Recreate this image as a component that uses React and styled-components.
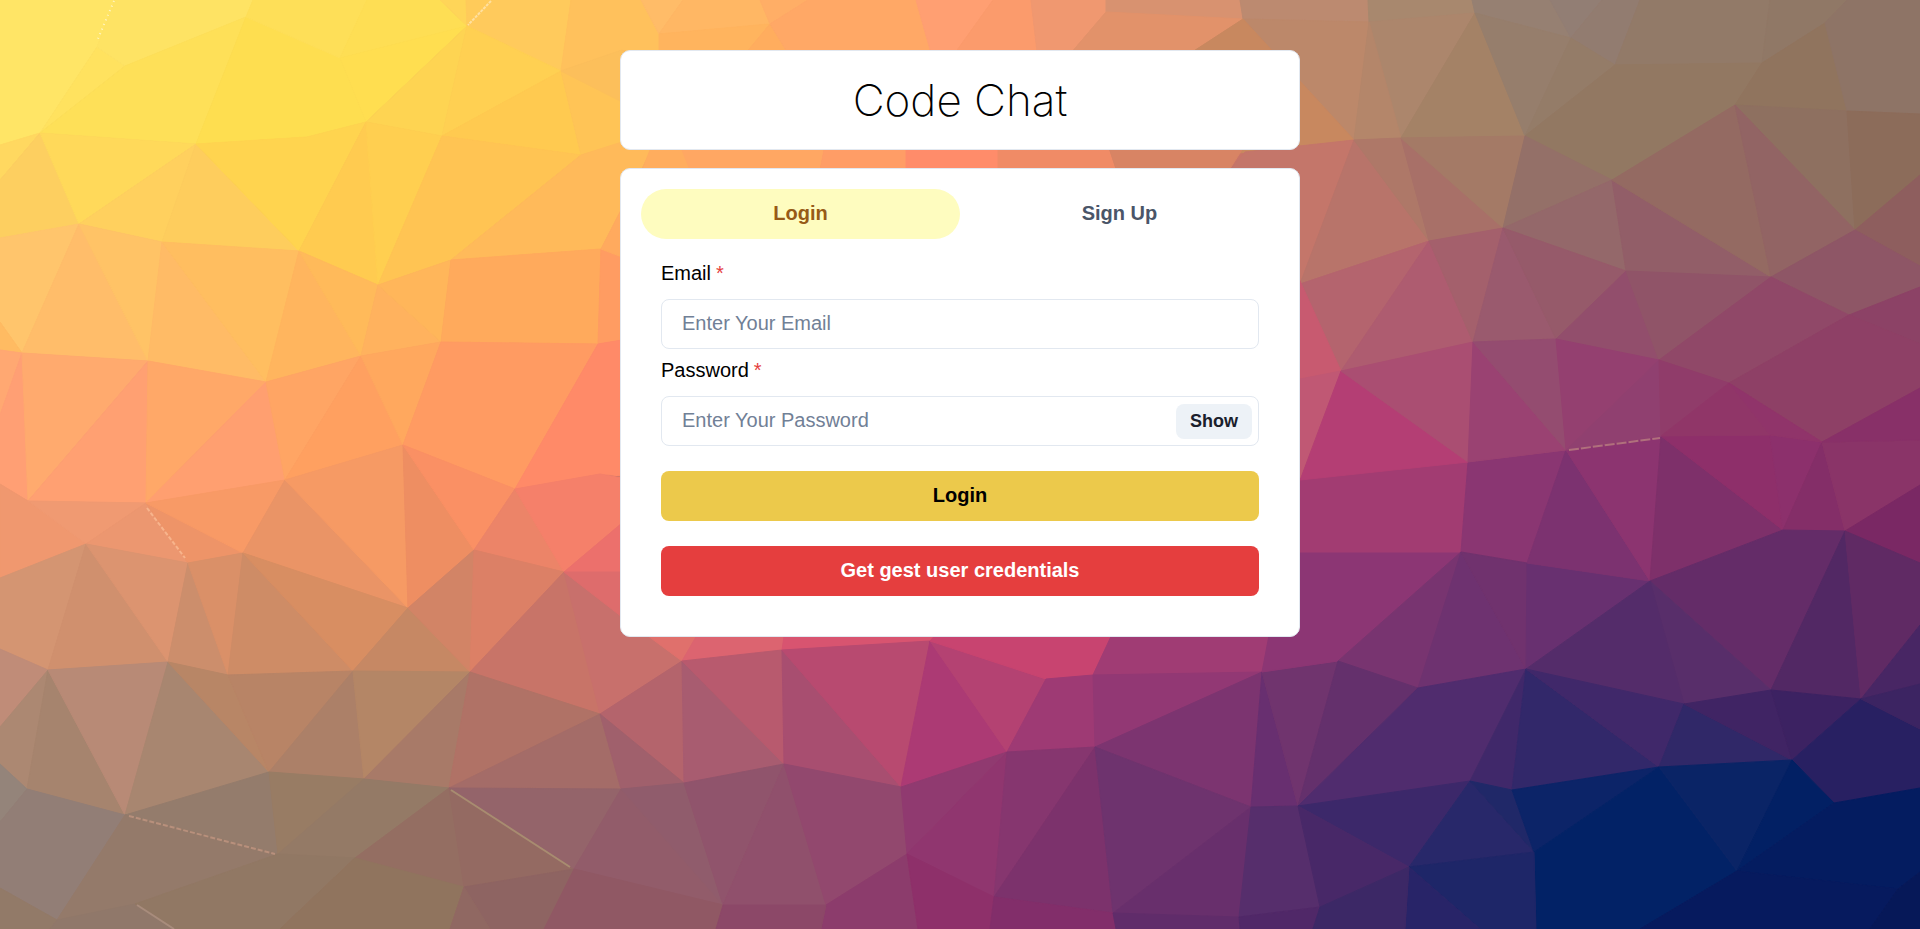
import { useState } from 'react';
import styled, { createGlobalStyle } from 'styled-components';

const GlobalStyle = createGlobalStyle`
  * {
    box-sizing: border-box;
  }

  body {
    margin: 0;
    font-family: 'Liberation Sans', Arial, sans-serif;
    font-size: 20px;
    line-height: 28px;
    color: #000000;
  }

  button,
  input {
    font: inherit;
  }
`;

const Page = styled.div`
  display: grid;
  min-height: 100vh;
`;

const Backdrop = styled.svg`
  grid-area: 1 / 1;
  display: block;
  width: 100%;
  height: 0;
  min-height: 100%;
`;

const Container = styled.main`
  grid-area: 1 / 1;
  z-index: 1;
  justify-self: center;
  align-self: start;
  display: flex;
  flex-direction: column;
  gap: 18px;
  width: 100%;
  max-width: 680px;
  padding: 50px 0;
`;

const Card = styled.section`
  padding: 20px;
  background: #ffffff;
  border: 1px solid #e2e8f0;
  border-radius: 10px;
`;

const Title = styled.h1`
  margin: 0;
  font-family: Inter, sans-serif;
  font-size: 44px;
  font-weight: 200;
  line-height: 58px;
  text-align: center;
`;

const TabList = styled.div`
  display: flex;
`;

const Tab = styled.button`
  flex: 1;
  height: 50px;
  padding: 0 20px 2px;
  border: none;
  border-radius: 25px;
  background: ${({ $active }) => ($active ? '#fefcbf' : 'transparent')};
  color: ${({ $active }) => ($active ? '#975a16' : '#4a5568')};
  font-weight: 600;
  cursor: pointer;
`;

const Form = styled.form`
  display: flex;
  flex-direction: column;
  gap: 25px;
  padding: 20px;
`;

const Fields = styled.div`
  display: flex;
  flex-direction: column;
  gap: 7px;
`;

const Field = styled.div`
  display: flex;
  flex-direction: column;
  gap: 12px;
`;

const Required = styled.span`
  margin-left: 5px;
  color: #e53e3e;
`;

const InputGroup = styled.div`
  display: flex;
  align-items: center;
  height: 50px;
  padding-right: 6px;
  border: 1px solid #e2e8f0;
  border-radius: 8px;

  &:focus-within {
    border-color: #3182ce;
  }
`;

const Input = styled.input`
  flex: 1;
  min-width: 0;
  height: 48px;
  padding: 0 20px 2px;
  border: none;
  outline: none;
  background: transparent;

  &::placeholder {
    color: #718096;
    opacity: 1;
  }
`;

const ShowButton = styled.button`
  height: 35px;
  padding: 0 14px;
  border: none;
  border-radius: 8px;
  background: #edf2f7;
  color: #1a202c;
  font-size: 18px;
  font-weight: 600;
  cursor: pointer;
`;

const Button = styled.button`
  height: 50px;
  padding: 0 20px 2px;
  border: none;
  border-radius: 8px;
  background: ${({ $danger }) => ($danger ? '#e53e3e' : '#ecc94b')};
  color: ${({ $danger }) => ($danger ? '#ffffff' : '#000000')};
  font-weight: 600;
  cursor: pointer;
`;

// low poly background, one entry per facet: [colour, points]
const facets = [
  ['#ffe566', '0,0 115,0 97,47 40,133 0,145'],
  ['#ffe25f', '97,47 125,66 40,133'],
  ['#fee364', '115,0 253,0 246,17 125,66 97,47'],
  ['#fee058', '125,66 246,17 196,144 40,133'],
  ['#fede50', '246,17 340,58 366,122 307,137 196,144'],
  ['#fedf58', '253,0 367,0 340,58 246,17'],
  ['#fede54', '367,0 440,0 467,26 340,58'],
  ['#ffde50', '340,58 467,26 366,122'],
  ['#ffd558', '440,0 466,0 467,26'],
  ['#fed452', '467,26 442,136 366,122'],
  ['#ffcb5a', '466,0 492,0 467,26'],
  ['#ffca5c', '492,0 571,0 561,71 467,26'],
  ['#ffd052', '467,26 561,71 442,136'],
  ['#ffca50', '442,136 561,71 581,155'],
  ['#ffc456', '561,71 640,100 622,143 581,155'],
  ['#ffc15c', '571,0 641,0 659,34 659,60 622,50 561,71'],
  ['#fcbf5b', '561,71 622,50 640,60 640,111'],

  ['#ffd860', '0,145 40,133 0,180'],
  ['#fdcf60', '40,133 79,224 0,238 0,180'],
  ['#ffd95a', '40,133 196,144 79,224'],
  ['#ffd05e', '196,144 162,242 79,224'],
  ['#fecd5d', '196,144 299,251 162,242'],
  ['#ffd44f', '196,144 307,137 366,122 299,251'],
  ['#ffcb50', '366,122 378,285 299,251'],
  ['#ffcf50', '366,122 442,136 378,285'],
  ['#ffc453', '442,136 581,155 451,260 378,285'],
  ['#ffba5a', '581,155 622,142 655,142 622,208 601,249 451,260'],

  ['#ffc56c', '0,238 79,224 22,353 0,322'],
  ['#ffbd6a', '79,224 148,361 22,353'],
  ['#ffc366', '79,224 162,242 148,361'],
  ['#ffbb66', '162,242 266,382 148,361'],
  ['#ffbe60', '162,242 299,251 266,382'],
  ['#ffb55e', '299,251 361,356 266,382'],
  ['#ffba5a', '299,251 378,285 361,356'],
  ['#ffb25e', '378,285 441,342 361,356'],
  ['#ffb65a', '378,285 451,260 441,342'],
  ['#ffaa5c', '451,260 601,249 598,344 441,342'],
  ['#ff9c62', '601,249 622,257 622,340 598,344'],
  ['#ffaa5e', '601,249 622,208 622,257'],
  ['#ffbb62', '0,322 22,353 0,350'],

  ['#ffa872', '0,350 22,353 0,415'],
  ['#ff9f74', '22,353 28,501 0,484 0,415'],
  ['#ffaa6e', '22,353 148,361 28,501'],
  ['#ffa072', '148,361 146,503 28,501'],
  ['#ffa868', '148,361 266,382 146,503'],
  ['#ff9f70', '266,382 285,480 146,503'],
  ['#ffa564', '266,382 361,356 285,480'],
  ['#ffa060', '361,356 403,445 285,480'],
  ['#ffa85e', '361,356 441,342 403,445'],
  ['#ff9b62', '441,342 598,344 515,489 403,445'],
  ['#ff8a68', '598,344 622,340 622,476 600,474 515,489'],

  ['#f0986f', '0,484 28,501 86,544 0,578'],
  ['#f09a72', '28,501 146,503 86,544'],
  ['#ec9770', '146,503 188,563 86,544'],
  ['#ee9468', '146,503 243,553 188,563'],
  ['#f89a66', '146,503 285,480 243,553'],
  ['#ea9466', '285,480 408,608 243,553'],
  ['#f69a64', '285,480 403,445 408,608'],
  ['#ee8e62', '403,445 474,550 408,608'],
  ['#fa9064', '403,445 515,489 474,550'],
  ['#ec8468', '515,489 564,572 474,550'],
  ['#f5806a', '515,489 600,474 622,478 622,523 564,572'],
  ['#ec706c', '622,523 622,572 564,572'],

  ['#d49572', '0,578 86,544 48,670 0,649'],
  ['#d0906e', '86,544 168,662 48,670'],
  ['#dc9470', '86,544 188,563 168,662'],
  ['#cc8e6c', '188,563 228,675 168,662'],
  ['#da9068', '188,563 243,553 228,675'],
  ['#ce8c66', '243,553 353,671 228,675'],
  ['#d88e62', '243,553 408,608 353,671'],
  ['#c68864', '408,608 470,672 353,671'],
  ['#d28466', '408,608 474,550 470,672'],
  ['#dc8066', '474,550 564,572 470,672'],
  ['#c87468', '564,572 600,714 470,672'],
  ['#c8706c', '564,572 640,630 682,661 600,714'],
  ['#de6c6c', '564,572 622,572 622,617'],

  ['#c08c78', '0,649 48,670 0,727'],
  ['#ac8872', '48,670 27,789 0,764 0,727'],
  ['#a6846e', '48,670 125,815 27,789'],
  ['#b88a76', '48,670 168,662 125,815'],
  ['#a88670', '168,662 269,772 125,815'],
  ['#b88666', '168,662 228,675 269,772'],
  ['#b88466', '228,675 353,671 269,772'],
  ['#ac8068', '353,671 364,779 269,772'],
  ['#b48666', '353,671 470,672 364,779'],
  ['#a87a68', '470,672 449,788 364,779'],
  ['#b07266', '470,672 600,714 449,788'],
  ['#a46c68', '600,714 621,789 449,788'],

  ['#94847a', '0,764 27,789 0,822'],
  ['#927e76', '0,822 27,789 125,815 57,920 0,888'],
  ['#947c6c', '125,815 269,772 278,854'],
  ['#947a6a', '125,815 278,854 135,904 57,920'],
  ['#987c64', '269,772 364,779 278,854'],
  ['#947a66', '364,779 449,788 355,858 278,854'],
  ['#946e62', '449,788 464,887 355,858'],
  ['#946a62', '449,788 574,869 464,887'],
  ['#94646a', '449,788 621,789 574,869'],
  ['#927a68', '0,888 57,920 50,929 0,929'],
  ['#90786a', '57,920 135,904 175,929 50,929'],
  ['#917864', '135,904 278,854 355,858 280,929 175,929'],
  ['#90745e', '355,858 464,887 450,929 280,929'],
  ['#8e6462', '464,887 574,869 544,929 490,929'],
  ['#906862', '464,887 490,929 450,929'],
  ['#925c6a', '574,869 621,789 723,905'],
  ['#905864', '574,869 723,905 716,929 544,929'],

  ['#e0706c', '640,630 700,630 682,661'],
  ['#dc6470', '682,661 700,630 785,630 782,650'],
  ['#d85470', '782,650 785,630 940,630 930,641'],
  ['#b4646c', '600,714 682,661 684,783'],
  ['#a0606c', '600,714 684,783 621,789'],
  ['#a85c70', '682,661 784,764 684,783'],
  ['#b85a6e', '682,661 782,650 784,764'],
  ['#a84e70', '782,650 901,787 784,764'],
  ['#b84a70', '782,650 930,641 901,787'],
  ['#ac3a74', '930,641 1007,752 901,787'],
  ['#b44272', '930,641 1046,679 1007,752'],
  ['#c84470', '930,641 940,630 1114,630 1093,675 1046,679'],
  ['#9e3a74', '1046,679 1093,675 1095,747 1007,752'],
  ['#a03c74', '1114,630 1270,630 1262,672 1093,675'],
  ['#923874', '1093,675 1262,672 1095,747'],
  ['#7c3470', '1262,672 1251,807 1095,747'],
  ['#682f70', '1262,672 1298,806 1251,807'],
  ['#70346e', '1262,672 1338,661 1298,806'],
  ['#8c3674', '1270,630 1290,552 1461,552 1338,661 1262,672'],

  ['#905c6c', '621,789 684,783 723,905'],
  ['#90546c', '684,783 784,764 723,905'],
  ['#90506c', '784,764 826,905 723,905'],
  ['#92486e', '784,764 901,787 907,854 826,905'],
  ['#903a70', '901,787 1007,752 907,854'],
  ['#90366f', '1007,752 994,897 907,854'],
  ['#86366f', '1007,752 1095,747 994,897'],
  ['#7c326c', '1095,747 1113,913 994,897'],
  ['#6e336e', '1095,747 1251,807 1113,913'],
  ['#682f6c', '1251,807 1239,917 1113,913'],
  ['#562e6c', '1251,807 1298,806 1320,907 1239,917'],
  ['#8c3c6c', '826,905 907,854 918,929 821,929'],
  ['#8c4868', '723,905 826,905 821,929 716,929'],
  ['#8e306a', '907,854 994,897 990,929 918,929'],
  ['#822e6a', '994,897 1113,913 1116,929 990,929'],
  ['#602c6a', '1113,913 1239,917 1240,929 1116,929'],
  ['#502868', '1239,917 1320,907 1313,929 1240,929'],

  ['#a23c72', '1290,481 1468,462 1461,552 1290,552'],
  ['#8a3672', '1468,462 1566,450 1527,563 1461,552'],
  ['#783470', '1461,552 1418,688 1338,661'],
  ['#6e3270', '1461,552 1526,669 1418,688'],
  ['#70326e', '1461,552 1527,563 1526,669'],
  ['#683070', '1527,563 1650,581 1526,669'],
  ['#7c3270', '1566,450 1650,581 1527,563'],
  ['#8c3470', '1566,450 1661,436 1650,581'],
  ['#7e306a', '1661,436 1783,530 1650,581'],
  ['#8e2f6a', '1661,436 1770,435 1783,530'],
  ['#8c306c', '1770,435 1822,442 1783,530'],
  ['#842e68', '1822,442 1845,531 1783,530'],
  ['#8a3468', '1822,442 1920,440 1920,485 1845,531'],
  ['#7a2864', '1920,485 1920,563 1845,531'],
  ['#642c68', '1650,581 1783,530 1845,531 1771,690'],
  ['#522864', '1845,531 1861,699 1771,690'],
  ['#602a64', '1845,531 1920,563 1920,625 1861,699'],
  ['#482664', '1920,625 1920,684 1861,699'],
  ['#582e6a', '1650,581 1771,690 1684,704'],
  ['#542c6a', '1650,581 1684,704 1526,669'],
  ['#64306c', '1338,661 1418,688 1298,806'],
  ['#502c6e', '1418,688 1526,669 1470,781 1298,806'],
  ['#40286a', '1526,669 1512,790 1470,781'],
  ['#32286a', '1526,669 1659,767 1512,790'],
  ['#40286a', '1526,669 1684,704 1659,767'],
  ['#302868', '1684,704 1792,760 1659,767'],
  ['#402464', '1684,704 1771,690 1792,760'],
  ['#3c2262', '1771,690 1861,699 1792,760'],
  ['#282062', '1861,699 1920,729 1920,788 1834,803 1792,760'],
  ['#3c2462', '1861,699 1920,684 1920,729'],
  ['#3c286a', '1298,806 1470,781 1409,867'],
  ['#482868', '1298,806 1409,867 1320,907'],
  ['#28286a', '1470,781 1534,852 1409,867'],
  ['#202868', '1470,781 1512,790 1534,852'],
  ['#0c2468', '1512,790 1659,767 1534,852'],
  ['#022266', '1659,767 1737,871 1640,929 1536,929 1534,852'],
  ['#0a2466', '1659,767 1792,760 1737,871'],
  ['#022064', '1792,760 1834,803 1737,871'],
  ['#041c60', '1834,803 1920,788 1920,872 1898,889 1737,871'],
  ['#061a5e', '1737,871 1898,889 1870,929 1640,929'],
  ['#061858', '1898,889 1920,872 1920,929 1870,929'],
  ['#1e2668', '1409,867 1534,852 1536,929 1480,929'],
  ['#282468', '1409,867 1480,929 1405,929'],
  ['#3c2866', '1409,867 1405,929 1313,929 1320,907'],

  ['#ffbc68', '641,0 683,0 659,34'],
  ['#ffb764', '683,0 760,0 770,24 659,34'],
  ['#ffb45e', '659,34 770,24 740,60 659,60'],
  ['#ffad5e', '770,24 792,60 740,60'],
  ['#ffae66', '760,0 808,0 770,24'],
  ['#ffa866', '808,0 916,0 933,60 792,60 770,24'],
  ['#ff9f72', '916,0 993,0 950,60 933,60'],
  ['#fb9b6c', '993,0 1031,0 1038,60 950,60'],
  ['#f09870', '1031,0 1106,0 1106,12 1065,60 1038,60'],
  ['#d89270', '1106,0 1240,0 1243,19 1106,12'],
  ['#e2926a', '1106,12 1243,19 1180,60 1065,60'],
  ['#bc8a70', '1240,0 1368,0 1369,22 1243,19'],
  ['#bc886a', '1243,19 1369,22 1354,140'],
  ['#c8885f', '1243,19 1354,140 1290,147 1180,160 1180,60'],
  ['#a8886e', '1368,0 1472,0 1475,13 1369,22'],
  ['#ac866c', '1369,22 1475,13 1401,138'],
  ['#b4866a', '1369,22 1401,138 1354,140'],
  ['#968072', '1472,0 1550,0 1571,38 1475,13'],
  ['#a48266', '1475,13 1525,136 1401,138'],
  ['#967e6c', '1475,13 1571,38 1525,136'],
  ['#927e74', '1550,0 1602,0 1571,38'],
  ['#927c70', '1602,0 1640,0 1615,65 1571,38'],
  ['#947c68', '1571,38 1615,65 1525,136'],
  ['#927a68', '1640,0 1770,0 1762,63 1615,65'],
  ['#927862', '1615,65 1762,63 1735,105 1612,180 1525,136'],
  ['#907866', '1770,0 1847,0 1825,23 1762,63'],
  ['#90745e', '1762,63 1825,23 1847,111 1735,105'],
  ['#8e7466', '1847,0 1920,0 1920,114 1847,111 1825,23'],
  ['#8e7060', '1735,105 1847,111 1855,230'],
  ['#8c6c5a', '1847,111 1920,114 1920,175 1855,230'],

  ['#ffad5e', '652,145 685,145 695,175 640,175'],
  ['#ffa763', '680,145 825,145 819,175 692,175'],
  ['#ff9d66', '825,145 906,145 906,175 819,175'],
  ['#ff8c6a', '906,145 1002,145 1015,175 906,175'],
  ['#f08b66', '998,145 1108,145 1118,175 998,175'],
  ['#d88464', '1108,145 1245,145 1226,175 1118,175'],
  ['#c4766a', '1245,152 1354,140 1300,284 1226,175'],
  ['#b8746a', '1354,140 1429,241 1300,284'],
  ['#ae7868', '1354,140 1401,138 1429,241'],
  ['#a87068', '1401,138 1503,228 1429,241'],
  ['#a47a66', '1401,138 1525,136 1503,228'],
  ['#947068', '1525,136 1612,180 1503,228'],
  ['#94686a', '1612,180 1626,271 1503,228'],
  ['#925e68', '1612,180 1771,277 1626,271'],
  ['#946a62', '1612,180 1735,105 1771,277'],
  ['#926464', '1735,105 1855,230 1771,277'],
  ['#8e5e5e', '1855,230 1920,175 1920,266'],
  ['#8e5666', '1771,277 1855,230 1920,266 1920,287 1849,315'],
  ['#b4646e', '1300,284 1429,241 1341,371'],
  ['#ae5c70', '1429,241 1473,342 1341,371'],
  ['#a4606c', '1429,241 1503,228 1473,342'],
  ['#9a5a6e', '1503,228 1556,339 1473,342'],
  ['#965a6a', '1503,228 1626,271 1556,339'],
  ['#924e6c', '1626,271 1659,360 1556,339'],
  ['#905468', '1626,271 1771,277 1659,360'],
  ['#904868', '1771,277 1849,315 1729,383 1659,360'],
  ['#8c4266', '1849,315 1920,287 1920,344'],
  ['#8e4066', '1849,315 1920,344 1920,388 1822,442 1729,383'],
  ['#883068', '1920,388 1920,440 1822,442'],
  ['#c85a70', '1295,270 1341,371 1295,380'],
  ['#c05874', '1295,380 1341,371 1295,490'],
  ['#b43e74', '1341,371 1468,462 1300,480'],
  ['#aa4e72', '1341,371 1473,342 1468,462'],
  ['#9a4272', '1473,342 1566,450 1468,462'],
  ['#944c70', '1473,342 1556,339 1566,450'],
  ['#944070', '1556,339 1659,360 1566,450'],
  ['#904070', '1659,360 1661,436 1566,450'],
  ['#903c6a', '1659,360 1729,383 1661,436'],
  ['#903668', '1729,383 1770,435 1661,436'],
  ['#90346a', '1729,383 1822,442 1770,435'],
];

// bright seams between some facets: [colour, path, dash]
const seams = [
  ['#fff6c8', 'M114 1L97 41', '1 4'],
  ['#ffe0a0', 'M491 1L468 25', '3 1'],
  ['#f8b48c', 'M147 508L185 558', '4 2'],
  ['#b8907c', 'M129 816L275 854', '5 2'],
  ['#a88c70', 'M451 790L570 867', 'none'],
  ['#a88c7c', 'M137 905L174 929', 'none'],
  ['#b0707c', 'M1569 450L1660 438', '10 2'],
];

const LowPolyBackdrop = () => (
  <Backdrop viewBox='0 0 1920 929' preserveAspectRatio='xMidYMid slice' aria-hidden='true'>
    <rect width='1920' height='929' fill='#c87468' />
    {facets.map(([color, points]) => (
      <polygon key={points} points={points} fill={color} stroke={color} strokeWidth='1' />
    ))}
    {seams.map(([color, d, dash]) => (
      <path key={d} d={d} stroke={color} strokeWidth='2' strokeDasharray={dash} fill='none' />
    ))}
  </Backdrop>
);

const App = () => {
  const [tab, setTab] = useState('login');
  const [email, setEmail] = useState('');
  const [password, setPassword] = useState('');
  const [show, setShow] = useState(false);

  return (
    <>
      <GlobalStyle />
      <Page>
        <LowPolyBackdrop />
        <Container>
          <Card>
            <Title>Code Chat</Title>
          </Card>
          <Card>
            <TabList role='tablist'>
              <Tab
                type='button'
                role='tab'
                aria-selected={tab === 'login'}
                $active={tab === 'login'}
                onClick={() => setTab('login')}
              >
                Login
              </Tab>
              <Tab
                type='button'
                role='tab'
                aria-selected={tab === 'signup'}
                $active={tab === 'signup'}
                onClick={() => setTab('signup')}
              >
                Sign Up
              </Tab>
            </TabList>
            <Form onSubmit={(e) => e.preventDefault()}>
              <Fields>
                <Field>
                  <label htmlFor='email'>
                    Email<Required>*</Required>
                  </label>
                  <InputGroup>
                    <Input
                      id='email'
                      type='email'
                      placeholder='Enter Your Email'
                      value={email}
                      onChange={(e) => setEmail(e.target.value)}
                    />
                  </InputGroup>
                </Field>
                <Field>
                  <label htmlFor='password'>
                    Password<Required>*</Required>
                  </label>
                  <InputGroup>
                    <Input
                      id='password'
                      type={show ? 'text' : 'password'}
                      placeholder='Enter Your Password'
                      value={password}
                      onChange={(e) => setPassword(e.target.value)}
                    />
                    <ShowButton type='button' onClick={() => setShow(!show)}>
                      {show ? 'Hide' : 'Show'}
                    </ShowButton>
                  </InputGroup>
                </Field>
              </Fields>
              <Button type='submit'>Login</Button>
              <Button
                type='button'
                $danger
                onClick={() => {
                  setEmail('guest@example.com');
                  setPassword('123456');
                }}
              >
                Get gest user credentials
              </Button>
            </Form>
          </Card>
        </Container>
      </Page>
    </>
  );
};

export default App;
